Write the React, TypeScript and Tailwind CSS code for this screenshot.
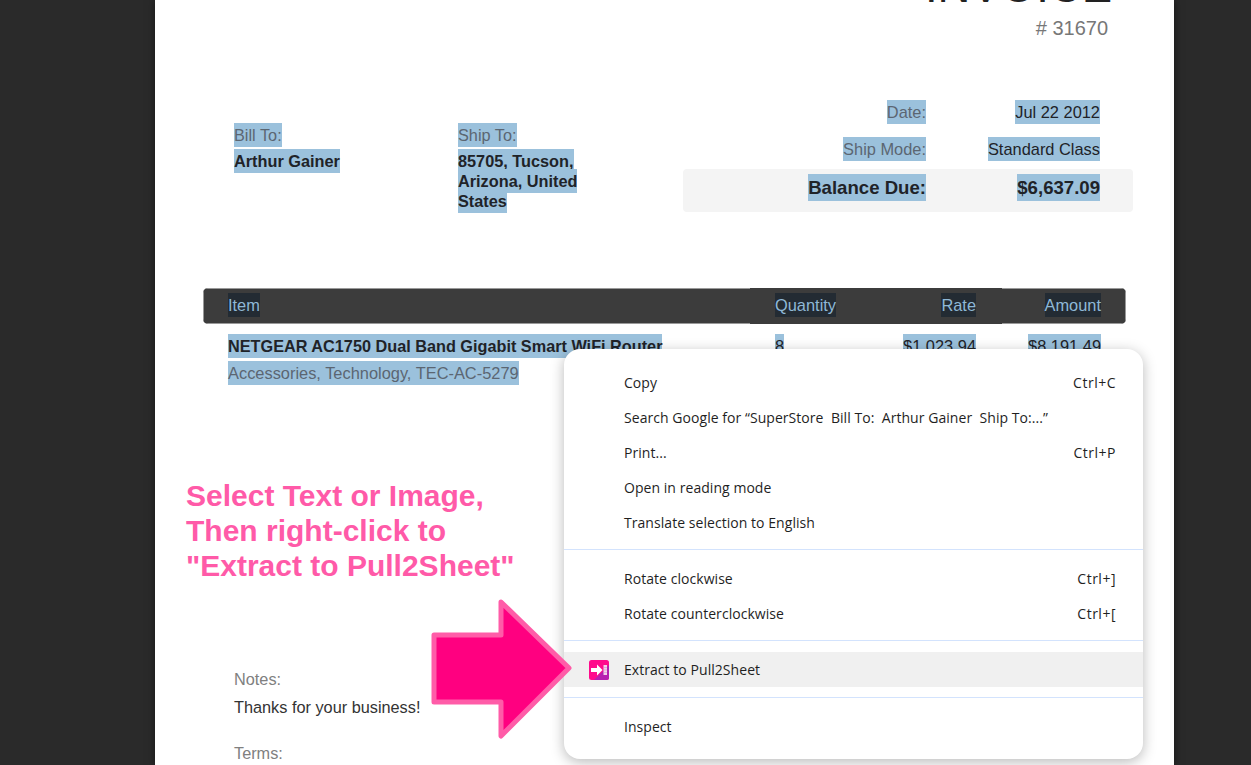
import React from "react";

function Sel({ children, dark, className = "" }: { children: React.ReactNode; dark?: boolean; className?: string }) {
  return (
    <span className={`${dark ? "bg-[#232b33] text-[#8fb8d6]" : "bg-[#9bc1dc]"} py-[3px] ${className}`}>
      {children}
    </span>
  );
}

function MenuRow({ label, shortcut, active, icon }: { label: string; shortcut?: string; active?: boolean; icon?: React.ReactNode }) {
  return (
    <div className={`flex h-[35px] items-center pr-[27px] ${active ? "bg-[#f0f0f0]" : ""}`}>
      <div className="flex w-[60px] shrink-0 justify-end pr-[15px]">{icon}</div>
      <span className="flex-1 whitespace-pre tracking-[0.05px]">{label}</span>
      {shortcut && <span className="tracking-[0.5px]">{shortcut}</span>}
    </div>
  );
}

function PullIcon() {
  return (
    <svg width="20" height="20" viewBox="0 0 20 20">
      <rect width="20" height="20" rx="2.500" fill="#ff0a8c" />
      <path d="M20 5V17.500a2.500 2.500 0 0 1-2.500 2.500H5z" fill="#b61fb0" />
      <path d="M2 8h6V4.500L13.500 10 8 15.500V12H2z" fill="#fff" />
      <path d="M14.500 5H18V15H14.500z" fill="#f3cfe8" />
      <path d="M14.500 7.500H18M14.500 10H18M14.500 12.500H18" stroke="#d88fcf" strokeWidth="0.600" />
    </svg>
  );
}

function ContextMenu() {
  return (
    <div className="absolute left-[564px] top-[349px] h-[410px] w-[579px] rounded-[16px] bg-white pt-4 font-['Open_Sans',sans-serif] text-[14px] text-[#1f1f1f] shadow-[0_3px_14px_rgba(0,0,0,0.28)]">
      <MenuRow label="Copy" shortcut="Ctrl+C" />
      <MenuRow label="Search Google for “SuperStore  Bill To:  Arthur Gainer  Ship To:...”" />
      <MenuRow label="Print..." shortcut="Ctrl+P" />
      <MenuRow label="Open in reading mode" />
      <MenuRow label="Translate selection to English" />
      <div className="mt-[9px] mb-[11px] h-px bg-[#d3e3fd]" />
      <MenuRow label="Rotate clockwise" shortcut="Ctrl+]" />
      <MenuRow label="Rotate counterclockwise" shortcut="Ctrl+[" />
      <div className="mt-[9px] mb-[11px] h-px bg-[#d3e3fd]" />
      <MenuRow label="Extract to Pull2Sheet" active icon={<PullIcon />} />
      <div className="mt-[10px] mb-[11px] h-px bg-[#d3e3fd]" />
      <MenuRow label="Inspect" />
    </div>
  );
}

export default function App() {
  return (
    <div className="relative h-[765px] w-[1251px] overflow-hidden bg-[#2a2a2a] font-['Liberation_Sans',sans-serif]">
      {/* Invoice sheet */}
      <div className="ml-[155px] h-[765px] w-[1019px] overflow-hidden bg-white shadow-[0_0_8px_rgba(0,0,0,0.5)]">
        {/* Title */}
        <div className="mr-[62px] -mt-[39px] text-right">
          <h1 className="text-[45.500px] leading-[52px] text-[#222]">INVOICE</h1>
          <div className="mt-[4px] pr-[4px] text-[20px] leading-[23px] text-[#777]">
            # 31670
          </div>
        </div>

        {/* Addresses and totals */}
        <div className="mt-[58px] flex">
          <div className="ml-[79px] w-[224px] pt-[27px] text-[16.3px] leading-[20px]">
            <div className="mb-[6px]"><Sel className="text-[#5b6672]">Bill To:</Sel></div>
            <div className="font-bold text-[#1f2328]"><Sel>Arthur Gainer</Sel></div>
          </div>
          <div className="w-[225px] pt-[27px] text-[16.3px] leading-[20px]">
            <div className="mb-[6px]"><Sel className="text-[#5b6672]">Ship To:</Sel></div>
            <div className="w-[125px] font-bold text-[#1f2328]">
              <Sel>85705, Tucson, Arizona, United States</Sel>
            </div>
          </div>
          <div className="w-[450px] pt-[2px] text-[16.4px] leading-[18px]">
            <div className="flex h-[37px] items-baseline justify-end pr-[33px]">
              <Sel className="text-[#5b6672]">Date:</Sel>
              <div className="w-[174px] text-right text-[#1f2328]"><Sel>Jul 22 2012</Sel></div>
            </div>
            <div className="flex h-[32px] items-baseline justify-end pr-[33px]">
              <Sel className="text-[#5b6672]">Ship Mode:</Sel>
              <div className="w-[174px] text-right text-[#1f2328]"><Sel>Standard Class</Sel></div>
            </div>
            <div className="flex h-[43px] items-center justify-end rounded-[4px] bg-[#f4f4f4] pb-[5px] pr-[33px] text-[18.6px] font-bold text-[#1f2328]">
              <div><Sel>Balance Due:</Sel></div>
              <div className="w-[174px] text-right"><Sel>$6,637.09</Sel></div>
            </div>
          </div>
        </div>

        {/* Item table */}
        <div className="ml-[48px] mt-[76px] w-[923px]">
          <div className="flex h-[36px] overflow-hidden rounded-[5px] bg-[#3c3c3c] text-[16.4px] leading-[35px]">
            <div className="h-full w-[547px] border-y border-l border-[#999] pl-[24px] leading-[33px]"><Sel dark>Item</Sel></div>
            <div className="w-[121px] pl-[25px]"><Sel dark>Quantity</Sel></div>
            <div className="w-[131px] pr-[26px] text-right"><Sel dark>Rate</Sel></div>
            <div className="h-full flex-1 border-y border-r border-[#999] pr-[24px] text-right leading-[33px]"><Sel dark>Amount</Sel></div>
          </div>
          <div className="mt-[12px] flex text-[16.4px] leading-[20px] text-[#1f2328]">
            <div className="w-[547px] pl-[25px]">
              <div className="text-[16.25px] font-bold"><Sel>NETGEAR AC1750 Dual Band Gigabit Smart WiFi Router</Sel></div>
              <div className="mt-[7px] text-[#5b6672]"><Sel>Accessories, Technology, TEC-AC-5279</Sel></div>
            </div>
            <div className="w-[121px] pl-[25px]"><Sel>8</Sel></div>
            <div className="w-[131px] pr-[26px] text-right"><Sel>$1,023.94</Sel></div>
            <div className="flex-1 pr-[25px] text-right"><Sel>$8,191.49</Sel></div>
          </div>
        </div>

        {/* Notes */}
        <div className="ml-[79px] mt-[286px] text-[16.3px] leading-[20px]">
          <div className="text-[#808080]">Notes:</div>
          <div className="mt-[8px] text-[#333]">Thanks for your business!</div>
          <div className="mt-[26px] text-[#808080]">Terms:</div>
        </div>
      </div>

      {/* Annotation over the page */}
      <div className="absolute left-[186px] top-[478px] text-[30px] font-bold leading-[35px] text-[#ff5aa8]">
        Select Text or Image,<br />
        Then right-click to<br />
        "Extract to Pull2Sheet"
      </div>

      <ContextMenu />

      <svg className="absolute left-[425px] top-[592px]" width="155" height="155" viewBox="0 0 155 155">
        <polygon
          points="9,43 76,43 76,10 144,76 76,144 76,110 9,110"
          fill="#ff0080"
          stroke="#ff5ca8"
          strokeWidth="5"
          strokeLinejoin="round"
        />
      </svg>
    </div>
  );
}
